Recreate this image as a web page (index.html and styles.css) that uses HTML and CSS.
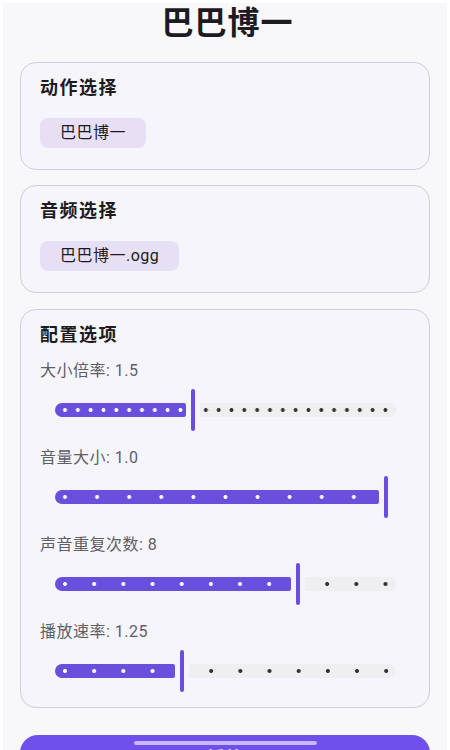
FILE: index.html
```html
<!DOCTYPE html>
<html lang="zh">
<head>
<meta charset="utf-8">
<title>巴巴博一</title>
<link rel="stylesheet" href="styles.css">
</head>
<body>
<div class="screen">
  <h1 class="title">巴巴博一</h1>

  <section class="card">
    <h2 class="card-title">动作选择</h2>
    <div class="chip">巴巴博一</div>
  </section>

  <section class="card">
    <h2 class="card-title">音频选择</h2>
    <div class="chip">巴巴博一.ogg</div>
  </section>

  <section class="card config">
    <h2 class="card-title">配置选项</h2>

    <div class="setting">
      <div class="label">大小倍率: 1.5</div>
      <div class="slider" style="--s:12.84px;--w:131.4px">
        <div class="active"></div><div class="thumb"></div><div class="inactive"></div>
      </div>
    </div>

    <div class="setting">
      <div class="label">音量大小: 1.0</div>
      <div class="slider full" style="--s:32.1px;--w:324px">
        <div class="active"></div><div class="thumb"></div><div class="inactive"></div>
      </div>
    </div>

    <div class="setting">
      <div class="label">声音重复次数: 8</div>
      <div class="slider" style="--s:29.18px;--w:236.45px">
        <div class="active"></div><div class="thumb"></div><div class="inactive"></div>
      </div>
    </div>

    <div class="setting">
      <div class="label">播放速率: 1.25</div>
      <div class="slider" style="--s:29.18px;--w:119.73px">
        <div class="active"></div><div class="thumb"></div><div class="inactive"></div>
      </div>
    </div>
  </section>

  <div class="play">播放</div>
</div>
<div class="home-bar"></div>
</body>
</html>
```

FILE: styles.css
```css
html, body {
  margin: 0;
  height: 100%;
  overflow: hidden;
  background: #ffffff;
}

.screen {
  margin: 3px 3px 0 3px;
  min-height: 747px;
  padding: 0 17px;
  background: #f8f7fa;
  font-family: Roboto, "Noto Sans CJK SC", sans-serif;
  color: #1d1b20;
}

.title {
  margin: 0 0 19px;
  font-size: 32px;
  line-height: 40px;
  font-weight: 700;
  text-align: center;
  letter-spacing: 1px;
  text-indent: 5px;
  color: #1d1b20;
}

.card {
  background: #f7f5fc;
  border: 1px solid #d0ced6;
  border-radius: 16px;
  padding: 13px 20px 13px 19px;
  margin-bottom: 15px;
}

.card-title {
  margin: 0;
  font-size: 18px;
  line-height: 24px;
  font-weight: 700;
  letter-spacing: 1.5px;
  color: #1d1b20;
}

.chip {
  width: fit-content;
  margin: 18px 0 8px;
  height: 30px;
  line-height: 30px;
  padding: 0 20px;
  border-radius: 8px;
  background: #e7e0f4;
  font-size: 16px;
  letter-spacing: 0.5px;
  color: #1d1b20;
}

.config {
  margin-top: 16px;
  padding-bottom: 15px;
}

.config .card-title {
  margin-bottom: 14px;
}

.setting + .setting {
  margin-top: 17px;
}

.label {
  font-size: 16px;
  line-height: 20px;
  letter-spacing: 0.5px;
  color: #5f5e64;
}

.slider {
  display: flex;
  align-items: center;
  height: 42px;
  margin: 8px 13px 0 15px;
}

.active {
  flex: none;
  width: var(--w);
  height: 14px;
  border-radius: 7px 2px 2px 7px;
  background:
    radial-gradient(circle, #ffffff 0 1.6px, transparent 2.3px) calc(10px - var(--s) / 2) 50% / var(--s) 14px repeat-x,
    #6a4fdc;
}

.thumb {
  flex: none;
  width: 4px;
  height: 42px;
  margin: 0 5px;
  border-radius: 2px;
  background: #6a4fdc;
}

.inactive {
  flex: 1;
  height: 14px;
  border-radius: 2px 7px 7px 2px;
  background:
    radial-gradient(circle, #333333 0 1.6px, transparent 2.3px) calc(var(--s) / 2 - 7px) 50% / var(--s) 14px repeat-x,
    #efeef1;
}

.slider.full .inactive {
  visibility: hidden;
}

.play {
  margin-top: 27px;
  height: 52px;
  padding-top: 12px;
  box-sizing: border-box;
  border-radius: 18px;
  background: #7050ea;
  color: #ffffff;
  font-size: 18px;
  line-height: 24px;
  font-weight: 600;
  text-align: center;
}

.home-bar {
  position: fixed;
  top: 741px;
  left: 134px;
  width: 183px;
  height: 4px;
  border-radius: 2px;
  background: rgba(255, 255, 255, 0.6);
}
```
